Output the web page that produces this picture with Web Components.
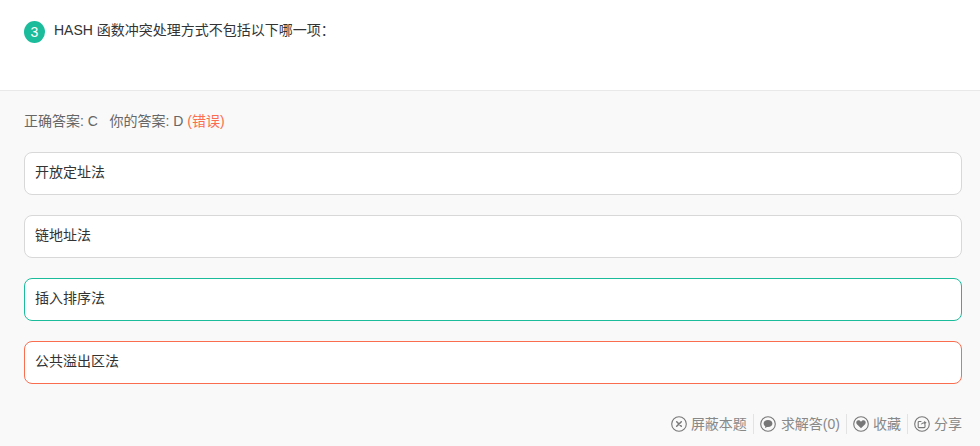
<!DOCTYPE html>
<html lang="zh">
<head>
<meta charset="utf-8">
<title>HASH</title>
<style>
  html,body{margin:0;padding:0;background:#f9f9f9}
  body{width:980px;height:446px;overflow:hidden;font-family:"Liberation Sans","Noto Sans CJK SC",sans-serif}
</style>
</head>
<body>
<quiz-card>
  <quiz-question num="3">HASH 函数冲突处理方式不包括以下哪一项：</quiz-question>
  <quiz-answers>
    <quiz-result correct="C" mine="D" verdict="(错误)"></quiz-result>
    <quiz-option>开放定址法</quiz-option>
    <quiz-option>链地址法</quiz-option>
    <quiz-option state="right">插入排序法</quiz-option>
    <quiz-option state="wrong">公共溢出区法</quiz-option>
    <quiz-actions>
      <quiz-action icon="close">屏蔽本题</quiz-action>
      <quiz-action icon="chat">求解答(0)</quiz-action>
      <quiz-action icon="heart">收藏</quiz-action>
      <quiz-action icon="share">分享</quiz-action>
    </quiz-actions>
  </quiz-answers>
</quiz-card>
<script>
  function shadow(el, html) {
    el.attachShadow({ mode: "open" }).innerHTML = html;
  }

  class QuizCard extends HTMLElement {
    constructor() {
      super();
      shadow(this, `<style>:host{display:flex;flex-direction:column;width:980px;height:446px}</style><slot></slot>`);
    }
  }

  class QuizQuestion extends HTMLElement {
    constructor() {
      super();
      shadow(this, `
        <style>
          :host{display:flex;align-items:flex-start;gap:9px;box-sizing:border-box;height:91px;padding:21px 24px 0;
                background:#fff;border-bottom:1px solid #e9e9e9;color:#333;font-size:14px;line-height:18px}
          .num{flex:none;width:21px;height:22px;border-radius:50%;background:#1abc9c;color:#fff;
               font-size:14px;line-height:22px;text-align:center}
        </style>
        <span class="num">${this.getAttribute("num")}</span>
        <span><slot></slot></span>`);
    }
  }

  class QuizAnswers extends HTMLElement {
    constructor() {
      super();
      shadow(this, `
        <style>:host{display:flex;flex-direction:column;gap:20px;flex:1;box-sizing:border-box;padding:22px 18px 0 24px;background:#f9f9f9}</style>
        <slot></slot>`);
    }
  }

  class QuizResult extends HTMLElement {
    constructor() {
      super();
      shadow(this, `
        <style>
          :host{display:flex;height:19px;color:#666;font-size:14px;line-height:16px;white-space:pre}
          .bad{color:#fa6d4f}
        </style>
        <span>正确答案: ${this.getAttribute("correct")}   你的答案: ${this.getAttribute("mine")} <span class="bad">${this.getAttribute("verdict")}</span></span>`);
    }
  }

  class QuizOption extends HTMLElement {
    constructor() {
      super();
      shadow(this, `
        <style>
          :host{display:flex;align-items:center;box-sizing:border-box;height:43px;padding:0 10px 6px;background:#fff;
                border:1px solid #d8d8d8;border-radius:8px;color:#333;font-size:14px}
          :host([state="right"]){border-color:#1abc9c}
          :host([state="wrong"]){border-color:#fa6d4f}
        </style>
        <slot></slot>`);
    }
  }

  class QuizActions extends HTMLElement {
    constructor() {
      super();
      shadow(this, `
        <style>:host{display:flex;justify-content:flex-end;align-items:center;height:20px;margin-top:10px}</style>
        <slot></slot>`);
    }
  }

  const ICONS = {
    close: `<path d="M5.7 5.7l4.6 4.600M10.300 5.700l-4.600 4.600" stroke-width="1.500"/>`,
    chat: `<path d="M8 3.900c-2.600 0-4.400 1.500-4.400 3.500 0 1.200.7 2.200 1.700 2.800l-.4 1.900 2.200-1.200h.9c2.600 0 4.400-1.500 4.400-3.500S10.600 3.900 8 3.900z" fill="#777" stroke="none"/>`,
    heart: `<path d="M8 12.300L3.900 8.200C2.500 6.600 3.600 4.300 5.500 4.300c1.100 0 2 .6 2.500 1.500.5-.9 1.400-1.500 2.500-1.500 1.900 0 3 2.300 1.600 3.900z" fill="#777" stroke="none"/>`,
    share: `<path d="M11 8.600v2.200c0 .5-.4.800-.8.800H5c-.5 0-.8-.3-.8-.8V6.300c0-.5.3-.8.8-.8h2" stroke-width="1.100"/><path d="M6.800 9c.3-1.800 1.600-2.800 3.400-2.800V4.800L12.600 6.800l-2.400 2V7.500C8.800 7.500 7.700 8 6.800 9z" fill="#777" stroke="none"/>`
  };

  class QuizAction extends HTMLElement {
    constructor() {
      super();
      shadow(this, `
        <style>
          :host{display:flex;align-items:center;gap:4px;height:20px;padding:0 6px;border-left:1px solid #e3e3e3;
                color:#888;font-size:14px;line-height:20px}
          :host(:first-child){border-left:none}
          :host(:last-child){padding-right:0}
          :host([icon="chat"]){gap:5px}
          svg{flex:none;display:block;width:16px;height:16px;fill:none;stroke:#777;stroke-width:1.100;stroke-linecap:round;stroke-linejoin:round}
        </style>
        <svg viewBox="0 0 16 16"><circle cx="8" cy="8" r="7.300"/>${ICONS[this.getAttribute("icon")]}</svg>
        <slot></slot>`);
    }
  }

  customElements.define("quiz-card", QuizCard);
  customElements.define("quiz-question", QuizQuestion);
  customElements.define("quiz-answers", QuizAnswers);
  customElements.define("quiz-result", QuizResult);
  customElements.define("quiz-option", QuizOption);
  customElements.define("quiz-actions", QuizActions);
  customElements.define("quiz-action", QuizAction);
</script>
</body>
</html>
